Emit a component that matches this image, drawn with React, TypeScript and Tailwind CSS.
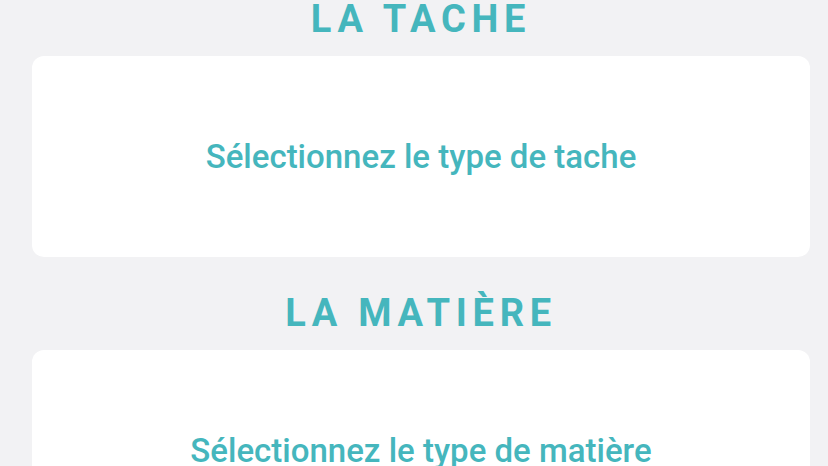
export default function App() {
    return (
        <div className="min-h-[466px] w-[828px] overflow-hidden bg-[#f2f2f4] pl-8 pr-[18px] font-['Roboto',sans-serif]">
            <h2 className="m-0 text-center text-[38px] font-bold uppercase leading-[38px] tracking-[0.15em] text-[#45b6bd]">
                La tache
            </h2>
            <div className="mt-[18px] flex h-[201px] items-center justify-center rounded-xl bg-white">
                <span className="text-[33px] font-medium leading-[33px] text-[#45b6bd]">Sélectionnez le type de tache</span>
            </div>
            <h2 className="m-0 mt-[37px] text-center text-[38px] font-bold uppercase leading-[38px] tracking-[0.15em] text-[#45b6bd]">
                La matière
            </h2>
            <div className="mt-[18px] flex h-[201px] items-center justify-center rounded-xl bg-white">
                <span className="text-[33px] font-medium leading-[33px] text-[#45b6bd]">Sélectionnez le type de matière</span>
            </div>
        </div>
    )
}
